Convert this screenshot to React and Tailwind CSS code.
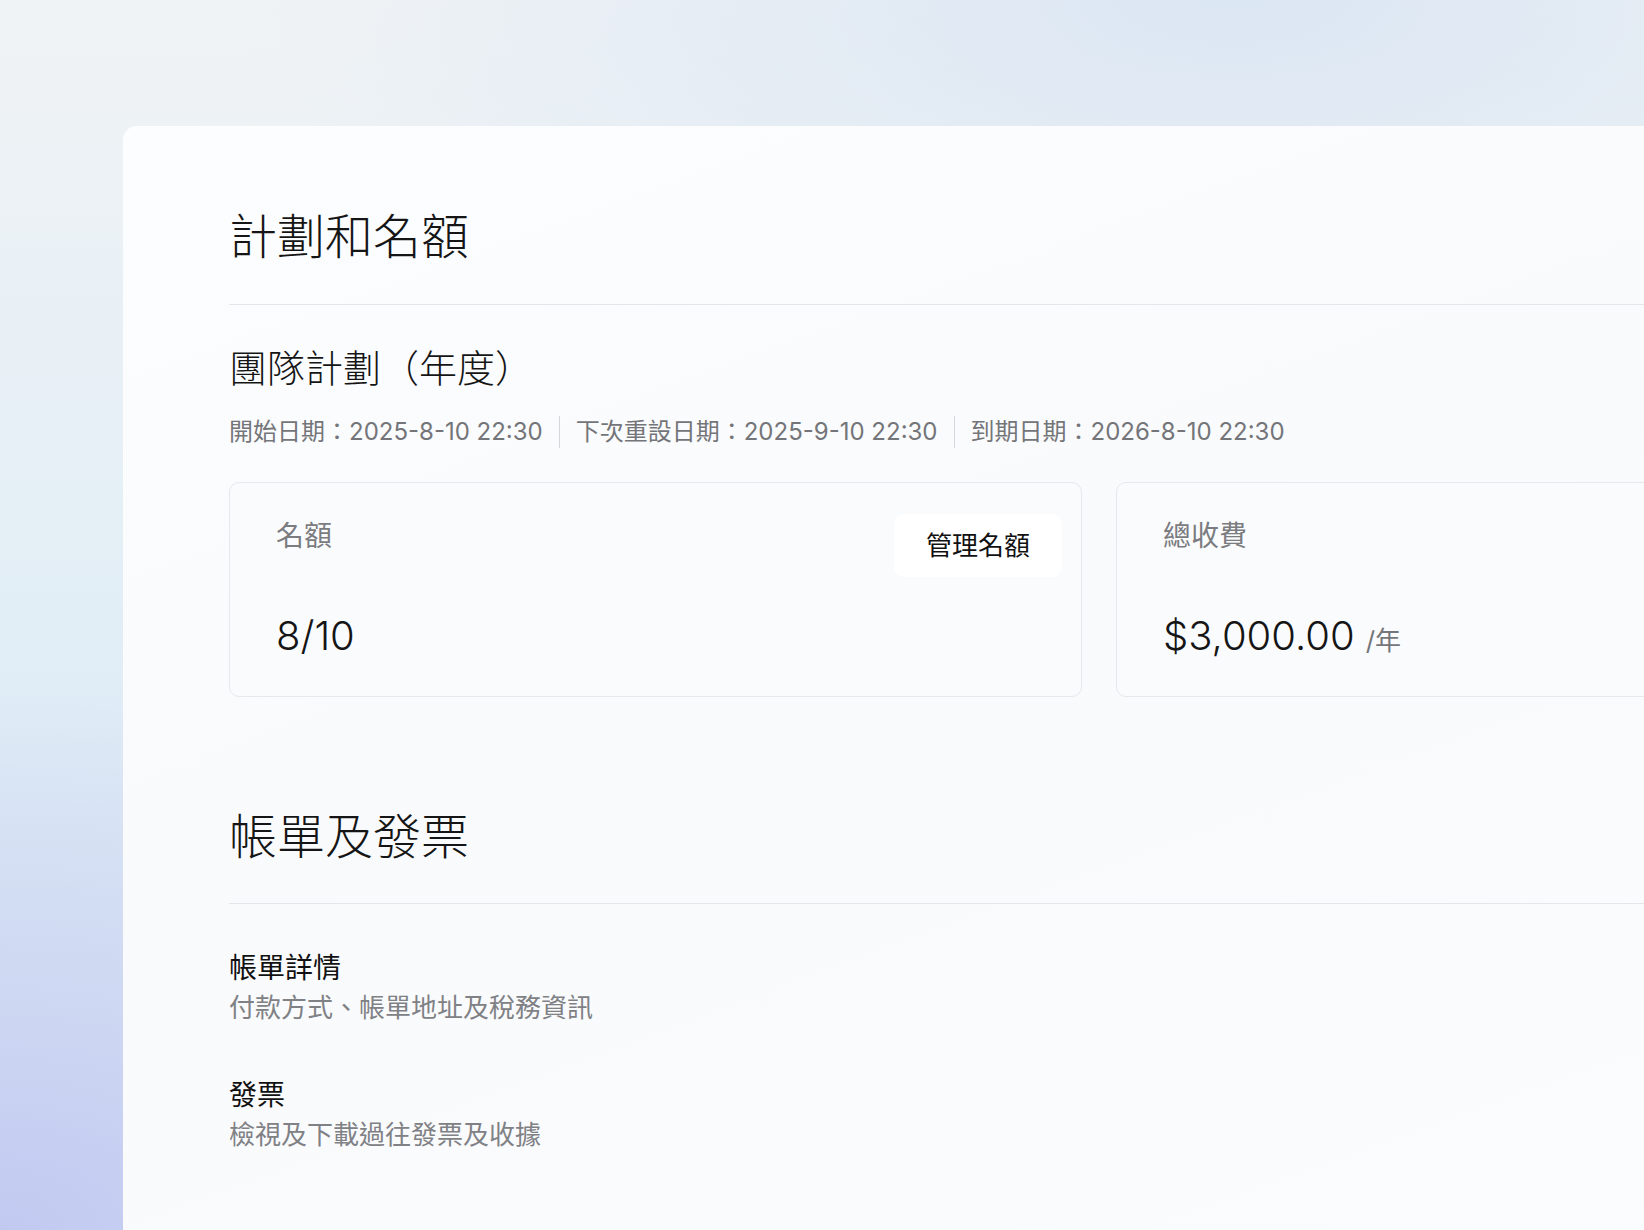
import React from 'react';

const dates = [
    { label: '開始日期', value: '2025-8-10 22:30' },
    { label: '下次重設日期', value: '2025-9-10 22:30' },
    { label: '到期日期', value: '2026-8-10 22:30' },
];

const billingItems = [
    { title: '帳單詳情', desc: '付款方式、帳單地址及稅務資訊' },
    { title: '發票', desc: '檢視及下載過往發票及收據' },
];

const StatCard = ({ label, action, children }) => (
    <div className="rounded-[10px] border border-[#e6e8ec] bg-[#fafbfd] pl-[46px] pr-[19px] pt-[31px] pb-9">
        <div className="flex min-h-[63px] items-start justify-between">
            <span className="mt-[2px] text-[28px] leading-[40px] text-[#7b7c80]">{label}</span>
            {action && (
                <button className="h-[63px] rounded-[10px] bg-white px-8 text-[26px] leading-none text-[#111]">
                    {action}
                </button>
            )}
        </div>
        <div className="mt-[35px] flex items-baseline">{children}</div>
    </div>
);

const App = () => {
    return (
        <div className="relative min-h-screen h-[1230px] w-full overflow-hidden bg-[radial-gradient(ellipse_55%_45%_at_0%_100%,#c1c9f1_0%,#cdd7f2_40%,transparent_100%),radial-gradient(ellipse_60%_30%_at_75%_0%,#dbe6f3_0%,transparent_100%),linear-gradient(180deg,#f0f3f5_0%,#e2eef6_50%,#d6e4f4_100%)] font-['Inter','Noto_Sans_CJK_TC',sans-serif] text-[#151515]">
            <div className="pl-[123px] pt-[126px]">
                <main className="w-[1952px] min-h-[1104px] rounded-tl-[14px] bg-[linear-gradient(160deg,#fcfdfe_0%,#f9fafc_45%,#fbfcfd_100%)] pl-[106px] pr-[106px] pt-[87px]">
                    {/* plan section */}
                    <h1 className="text-[48px] font-light leading-[48px]">計劃和名額</h1>
                    <div className="mt-[43px] h-px bg-[#e4e6ea]" />

                    <h2 className="mt-[44px] text-[38px] font-light leading-[38px]">團隊計劃（年度）</h2>
                    <div className="mt-[29px] flex items-center text-[24px] leading-8 text-[#747579]">
                        {dates.map((d, i) => (
                            <React.Fragment key={d.label}>
                                {i > 0 && <span className="mx-4 h-8 w-px bg-[#d5d7db]" />}
                                <span>{d.label}：{d.value}</span>
                            </React.Fragment>
                        ))}
                    </div>

                    <div className="mt-[34px] grid grid-cols-2 gap-[34px]">
                        <StatCard label="名額" action="管理名額">
                            <span className="text-[40px] font-light leading-[48px]">8/10</span>
                        </StatCard>
                        <StatCard label="總收費">
                            <span className="text-[40px] font-light leading-[48px]">$3,000.00</span>
                            <span className="ml-[11px] text-[26px] text-[#75767a]">/年</span>
                        </StatCard>
                    </div>

                    {/* billing section */}
                    <h1 className="mt-[116px] text-[48px] font-light leading-[48px]">帳單及發票</h1>
                    <div className="mt-[42px] h-px bg-[#e4e6ea]" />

                    <div className="mt-[44px] flex flex-col gap-[49px]">
                        {billingItems.map(item => (
                            <div key={item.title} className="flex flex-col gap-[2px]">
                                <span className="text-[28px] leading-[40px] text-[#111]">{item.title}</span>
                                <span className="text-[26px] leading-[36px] text-[#808185]">{item.desc}</span>
                            </div>
                        ))}
                    </div>
                </main>
            </div>
        </div>
    );
};

export default App;
